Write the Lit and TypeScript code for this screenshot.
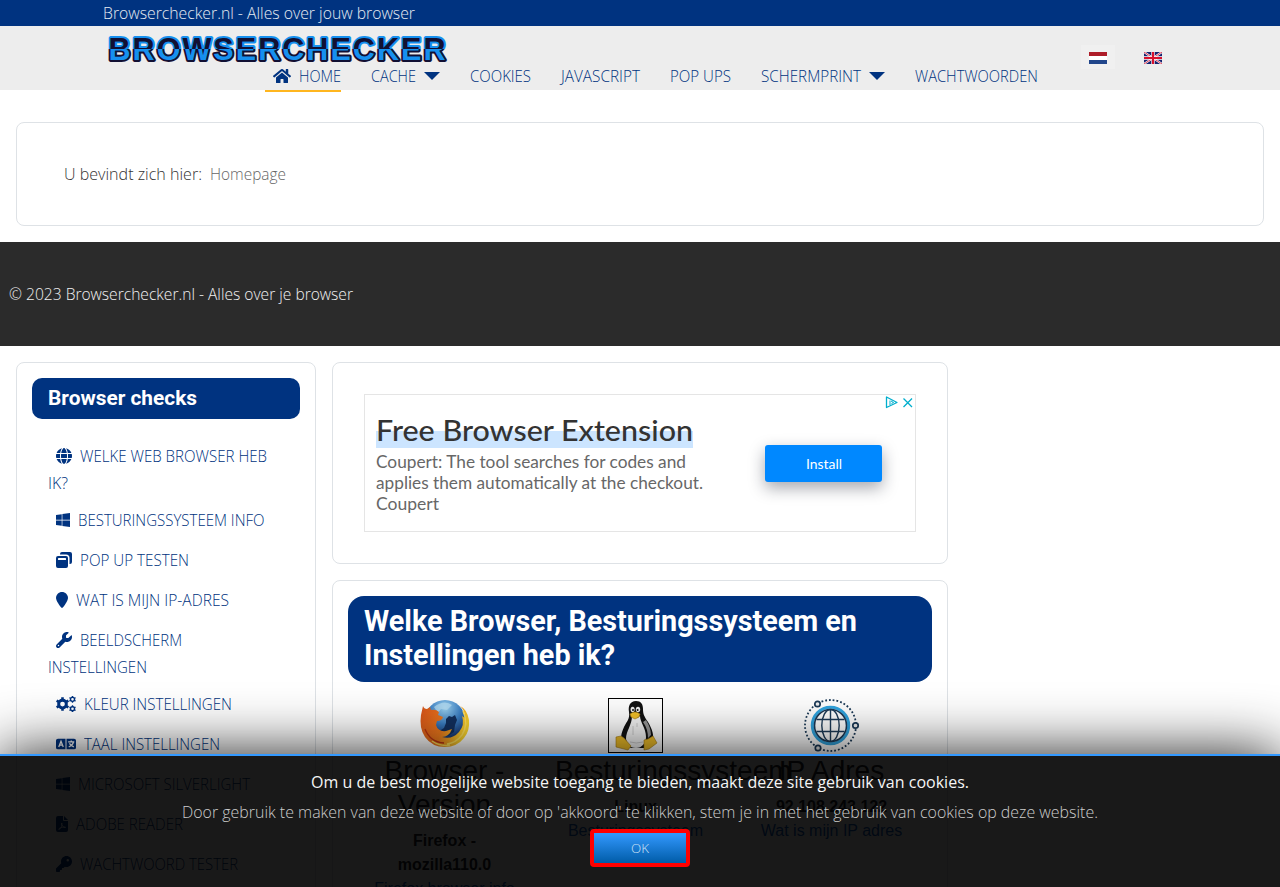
import { LitElement, html, css, svg } from "lit";
import { customElement, property, query } from "lit/decorators.js";

/* Text run stretched horizontally to a given width. */
@customElement("fit-text")
class FitText extends LitElement {
  @property({ type: Number }) w = 100;
  @property() text = "";
  @query("span") run!: HTMLSpanElement;
  static styles = css`
    :host { display: inline-block; white-space: nowrap; }
    span { display: inline-block; transform-origin: 0 50%; }
  `;
  render() { return html`<span>${this.text}</span>`; }
  updated() {
    this.run.style.transform = "none";
    const natural = this.run.getBoundingClientRect().width || this.w;
    this.style.width = this.w + "px";
    this.run.style.transform = `scaleX(${this.w / natural})`;
  }
}

const fit = (text: string, w: number) => html`<fit-text .text=${text} .w=${w}></fit-text>`;

const gear = (cx: number, cy: number, r: number, teeth: number, hole: number) => {
  let d = "";
  for (let i = 0; i < teeth; i++) {
    const a = (i / teeth) * Math.PI * 2 + Math.PI / 2;
    const s = Math.PI / teeth;
    [[-0.95, 0.76], [-0.45, 0.78], [-0.36, 1], [0.36, 1], [0.45, 0.78], [0.95, 0.76]].forEach(([k, m]) => {
      d += `${d ? "L" : "M"}${(cx + Math.cos(a + k * s) * r * m).toFixed(1)} ${(cy + Math.sin(a + k * s) * r * m).toFixed(1)}`;
    });
  }
  return `${d}ZM${cx - hole} ${cy}a${hole} ${hole} 0 1 0 ${hole * 2} 0a${hole} ${hole} 0 1 0 ${-hole * 2} 0Z`;
};

const p = (d: string) => svg`<path fill-rule="evenodd" d=${d}/>`;
const WINDOWS = "M0 93.7l183.6-25.3v177.4H0V93.7zm0 324.6l183.6 25.3V268.4H0v149.9zm203.8 28L448 480V268.4H203.8v177.9zm0-380.6v180.1H448V32L203.8 65.7z";
const icons: Record<string, [number, unknown]> = {
  home: [576, p("M280.37 148.26L96 300.11V464a16 16 0 0 0 16 16l112.06-.29a16 16 0 0 0 15.92-16V368a16 16 0 0 1 16-16h64a16 16 0 0 1 16 16v95.64a16 16 0 0 0 16 16.05L464 480a16 16 0 0 0 16-16V300L295.67 148.26a12.19 12.19 0 0 0-15.3 0zM571.6 251.47L488 182.56V44.05a12 12 0 0 0-12-12h-56a12 12 0 0 0-12 12v72.61L318.47 43a48 48 0 0 0-61 0L4.34 251.47a12 12 0 0 0-1.6 16.9l25.5 31A12 12 0 0 0 45.15 301l235.22-193.74a12.19 12.19 0 0 1 15.3 0L530.9 301a12 12 0 0 0 16.9-1.6l25.5-31a12 12 0 0 0-1.7-16.93z")],
  globe: [512, p("M352 256c0 22.2-1.2 43.6-3.3 64H163.3c-2.2-20.4-3.3-41.8-3.3-64s1.2-43.6 3.3-64H348.7c2.2 20.4 3.3 41.8 3.3 64zm28.8-64H503.9c5.3 20.5 8.1 41.9 8.1 64s-2.8 43.5-8.1 64H380.8c2.1-20.6 3.2-42 3.2-64s-1.1-43.4-3.2-64zm112.6-32H376.7c-10-63.9-29.8-117.4-55.3-151.6c78.3 20.7 142 77.5 171.9 151.6zm-149.1 0H167.7c6.1-36.4 15.5-68.6 27-94.7c10.5-23.6 22.2-40.7 33.5-51.5C239.4 3.2 248.7 0 256 0s16.6 3.2 27.8 13.8c11.3 10.8 23 27.9 33.5 51.5c11.6 26 20.9 58.2 27 94.7zm-209 0H18.6C48.6 85.9 112.2 29.1 190.6 8.4C165.1 42.6 145.3 96.1 135.3 160zM8.1 192H131.2c-2.1 20.6-3.2 42-3.2 64s1.1 43.4 3.2 64H8.1C2.8 299.5 0 278.1 0 256s2.8-43.5 8.1-64zM194.7 446.6c-11.6-26-20.9-58.2-27-94.6H344.3c-6.1 36.4-15.5 68.6-27 94.6c-10.5 23.6-22.2 40.7-33.5 51.5C272.6 508.8 263.3 512 256 512s-16.6-3.2-27.8-13.8c-11.3-10.8-23-27.9-33.5-51.5zM135.3 352c10 63.9 29.8 117.4 55.3 151.6C112.2 482.9 48.6 426.1 18.6 352H135.3zm358.1 0c-30 74.1-93.6 130.9-171.9 151.6c25.5-34.2 45.2-87.7 55.3-151.6H493.4z")],
  windows: [448, p(WINDOWS)],
  popup: [512, p("M192 0H448Q512 0 512 64V320Q512 384 448 384H432V192Q432 80 320 80H128V64Q128 0 192 0ZM64 128H320Q384 128 384 192V448Q384 512 320 512H64Q0 512 0 448V192Q0 128 64 128ZM84 192Q64 192 64 212V236Q64 256 84 256H300Q320 256 320 236V212Q320 192 300 192Z")],
  pin: [384, p("M384 192c0 87.4-117 243-168.3 307.2c-12.3 15.3-35.1 15.3-47.4 0C117 435 0 279.4 0 192C0 86 86 0 192 0S384 86 384 192z")],
  wrench: [512, p("M352 320c88.4 0 160-71.6 160-160c0-15.3-2.2-30.1-6.2-44.2c-3.1-10.8-16.4-13.2-24.3-5.3l-76.8 76.8c-3 3-7.1 4.7-11.3 4.7H336c-8.8 0-16-7.2-16-16V118.6c0-4.2 1.7-8.3 4.7-11.3l76.8-76.8c7.9-7.9 5.4-21.2-5.3-24.3C382.1 2.2 367.3 0 352 0C263.6 0 192 71.6 192 160c0 19.1 3.4 37.5 9.5 54.5L19.9 396.1C7.2 408.8 0 426.1 0 444.1C0 481.6 30.4 512 67.9 512c18 0 35.3-7.2 48-19.9L297.5 310.5c17 6.2 35.4 9.5 54.5 9.5zM80 408a24 24 0 1 1 0 48 24 24 0 1 1 0-48z")],
  gears: [640, p(gear(208, 256, 222, 6, 76) + gear(528, 106, 114, 6, 42) + gear(528, 408, 114, 6, 42))],
  language: [640, svg`<path fill-rule="evenodd" d="M64 88H576Q640 88 640 140V372Q640 424 576 424H64Q0 424 0 372V140Q0 88 64 88ZM304 88V424H336V88Z"/><path fill="none" stroke="#fff" stroke-width="42" d="M88 350L160 166L232 350M112 292H208M390 190H586M488 140V190M556 196Q536 300 408 348M430 236Q476 316 572 348"/>`],
  pdf: [384, svg`<path fill-rule="evenodd" d="M64 0H224V128Q224 160 256 160H384V448Q384 512 320 512H64Q0 512 0 448V64Q0 0 64 0ZM256 0L384 128H256Z"/><path fill="none" stroke="#fff" stroke-width="26" d="M184 222C216 316 140 424 88 430C66 404 180 348 300 354C330 384 222 380 176 270Z"/>`],
  key: [512, p("M336 352c97.2 0 176-78.8 176-176S433.2 0 336 0S160 78.8 160 176c0 18.7 2.9 36.8 8.3 53.7L7 391c-4.5 4.5-7 10.6-7 17v80c0 13.3 10.7 24 24 24h80c13.3 0 24-10.7 24-24V448h40c13.3 0 24-10.7 24-24V384h40c6.4 0 12.5-2.5 17-7l33.3-33.3c16.9 5.4 35 8.3 53.7 8.3zM376 96a40 40 0 1 1 0 80 40 40 0 1 1 0-80z")],
};

const icon = (name: string) => {
  const [w, body] = icons[name];
  return html`<svg class="icon" viewBox="0 0 ${w} 512" width=${w / 32} height="16">${body}</svg>`;
};

type Item = { icon: string; text: string; w: number; rest?: string; restW?: number };
const menu: Item[] = [
  { icon: "globe", text: "WELKE WEB BROWSER HEB", w: 187, rest: "IK?", restW: 20 },
  { icon: "windows", text: "BESTURINGSSYSTEEM INFO", w: 186.5 },
  { icon: "popup", text: "POP UP TESTEN", w: 109 },
  { icon: "pin", text: "WAT IS MIJN IP-ADRES", w: 153 },
  { icon: "wrench", text: "BEELDSCHERM", w: 102, rest: "INSTELLINGEN", restW: 99 },
  { icon: "gears", text: "KLEUR INSTELLINGEN", w: 148 },
  { icon: "language", text: "TAAL INSTELLINGEN", w: 136 },
  { icon: "windows", text: "MICROSOFT SILVERLIGHT", w: 172 },
  { icon: "pdf", text: "ADOBE READER", w: 107 },
  { icon: "key", text: "WACHTWOORD TESTER", w: 158 },
];

const caret = html`<svg class="caret" width="16" height="8" viewBox="0 0 16 8"><path d="M0 0H16L8 8Z"/></svg>`;

@customElement("app-root")
class AppRoot extends LitElement {
  static styles = css`
    :host { display: block; height: 887px; overflow: hidden; position: relative; background: #fff; color: #333;
      font: 300 15.5px/27px "Open Sans", "Noto Sans", sans-serif; }
    * { box-sizing: border-box; }
    svg { display: block; flex: none; }
    .top { height: 26px; background: #003380; color: #e6ebf2; padding-left: 103px; line-height: 26px; }
    header { height: 64px; background: #ededed; display: flex; color: #003380; }
    .brand { width: 1081px; flex: none; }
    .logo { margin: 7px 0 0 105px; }
    .logo text { font: bold 30.5px "Liberation Sans", Arial, sans-serif; }
    nav { display: flex; gap: 30px; margin-left: 265px; height: 29px; margin-top: -5px; }
    nav .item { display: flex; gap: 8px; align-items: center; height: 29px; flex: none; }
    nav .active { padding-left: 8px; border-bottom: 2px solid #ffb61f; height: 30px; padding-top: 1px; }
    .icon, .caret { fill: currentColor; }
    .icon, .caret { margin-top: -2px; }
    .flags { display: flex; margin-top: 19px; gap: 29px; height: 24px; }
    .flag { padding: 7px 8px 0; }
    .flag.on { background: #f0f0f0; }
    .flag + .flag { padding-left: 0; }
    .card { border: 1px solid #dee2e6; border-radius: 8px; background: #fff; }
    .crumbs { margin: 32px 16px 16px; height: 104px; padding: 38px 47px; display: flex; gap: 8px; }
    .here { color: #666; }
    footer { height: 104px; background: #2b2b2b; color: #f2f2f2; padding: 39px 9px; }
    .cols { display: flex; gap: 16px; padding: 16px; }
    aside { width: 300px; height: 640px; padding: 15px; flex: none; color: #003380; }
    h3 { margin: 0 0 24px; height: 41px; background: #003380; border-radius: 10px; color: #fff; padding: 0 16px; font: 700 20px/40px Roboto, sans-serif; }
    .entry { height: 40px; padding-left: 16px; }
    .entry.two { height: 64px; }
    .line { display: flex; align-items: center; gap: 8px; padding-left: 8px; height: 27px; }
    .second { height: 27px; }
    main { width: 616px; flex: none; display: flex; flex-direction: column; gap: 16px; }
    .adcard { height: 202px; padding: 31px; }
    .ad { height: 138px; border: 1px solid #e5e5e5; display: flex; position: relative; padding: 17px 0 0 11px; font-family: Lato, sans-serif; font-weight: 400; }
    .copy { width: 389px; color: #676767; font-size: 17px; line-height: 21px; }
    .copy div { height: 21px; }
    .copy .headline { font-size: 29.5px; line-height: 36px; height: 39px; color: #333; font-weight: 500; }
    .hl { display: inline-block; height: 36px; background: linear-gradient(#fff0 19px, #cce5ff 19px); }
    .install { margin-top: 33px; width: 117px; height: 37px; border-radius: 3px; background: #0088ff; color: #fff; font-size: 14px; line-height: 38px; text-align: center; box-shadow: 0 6px 16px rgba(20, 25, 45, .38); }
    .choices { position: absolute; right: 1px; top: 0; }
    .content { height: 420px; padding: 15px; }
    h2 { margin: 0 0 16px; height: 86px; border-radius: 16px; background: #003380; color: #fff; padding: 8px 16px; font: 700 28.8px/34px Roboto, sans-serif; }
    h2 div { height: 34px; }
    .checks { display: flex; padding-left: 16px; font: 400 16px/24px "Liberation Sans", Arial, sans-serif; color: #212529; text-align: center; }
    .check { width: 161px; flex: none; margin-right: 30px; }
    .check.mid { margin-right: 35px; }
    .check > svg { margin: 0 auto; }
    .check h4 { margin: 1px 0 7px; font: 400 28px/34px "Liberation Sans", Arial, sans-serif; white-space: nowrap; text-align: left; }
    .check h4.c { text-align: center; }
    .check a { color: #0d5bc0; }
    b { display: block; }
    .cookie { position: absolute; left: 0; right: 0; bottom: 0; height: 133px; border-top: 2px solid #3399ff; background: rgba(0, 0, 0, .9); background-clip: padding-box; box-shadow: 0 0 60px rgba(0, 0, 0, .9); display: flex; flex-direction: column; align-items: center; padding-top: 13px; color: #ccc; }
    .cookie .lead { color: #f5f5f5; font-weight: 400; height: 30px; }
    .cookie .more { height: 30px; }
    .ok { width: 100px; height: 38px; border: 4px solid #f00; border-radius: 4px; background: linear-gradient(#3399ff, #005ca8); color: #cfe2f5; text-align: center; font-size: 13.5px; line-height: 31px; }
  `;

  logo() {
    return html`<svg class="logo" width="346" height="34" viewBox="0 0 346 34">
      <defs>
        <linearGradient id="f" gradientUnits="userSpaceOnUse" x1="0" y1="0" x2="0" y2="34"><stop offset=".48" stop-color="#111033"/><stop offset=".48" stop-color="#1690ef"/></linearGradient>
        <linearGradient id="s" gradientUnits="userSpaceOnUse" x1="0" y1="0" x2="0" y2="34"><stop offset=".48" stop-color="#1690ef"/><stop offset=".48" stop-color="#111033"/></linearGradient>
      </defs>
      <text x="3.500" y="26.500" textLength="337" lengthAdjust="spacing" fill="url(#f)" stroke="url(#s)" stroke-width="3.800" stroke-linejoin="round" paint-order="stroke">BROWSERCHECKER</text>
    </svg>`;
  }

  firefox() {
    return html`<svg width="55" height="55" viewBox="0 0 55 55">
      <defs>
        <radialGradient id="b" cx=".5" cy=".2" r=".8"><stop stop-color="#9dd4f3"/><stop offset=".5" stop-color="#3b7fc4"/><stop offset="1" stop-color="#122c66"/></radialGradient>
        <linearGradient id="o" x1="0" y1="0" x2="1" y2=".3"><stop stop-color="#d9541a"/><stop offset=".55" stop-color="#ee7a1c"/><stop offset="1" stop-color="#fbd52d"/></linearGradient>
      </defs>
      <circle cx="28" cy="22" r="20" fill="url(#b)"/>
      <path fill="#12305f" d="M29 21l3-3 3 1 3-2 2 5-2 5-1 7-6 4-3-3-7-1 6-4 2-5z"/>
      <path fill="#b9e0f5" opacity=".7" d="M17 9q10-8 18-2l-5 5-6-1-3 4z"/>
      <path fill="url(#o)" d="M6 8q1 3 4 3l3-2 1 3q5-1 8 2l-1 3 5 2q-1 4-6 4l-1 4q2 7 10 6l6-2q-3 8-10 8 10 3 17-5 6-7 3-16l3 2q0-8-5-12 7 3 9 14 1 11-5 18-7 9-19 9-13 0-20-10-6-9-4-22z"/>
      <path fill="none" stroke="#ffe15c" stroke-width="1.400" d="M46 13q6 13-1 24-6 8-15 9M15 43q9 6 18 4"/>
      <path fill="none" stroke="#b83312" stroke-width="1.300" d="M8 31q5 13 19 14"/>
    </svg>`;
  }

  tux() {
    return html`<svg width="55" height="55" viewBox="0 0 55 55">
      <rect x=".5" y=".5" width="54" height="54" fill="#fff" stroke="#000"/>
      <path fill="#111" d="M28 3c-6 0-8 5-7 11 1 7-2 9-5 15-3 7-4 11-1 16l8 5h13l8-6c3-6 0-13-4-20-4-6-5-8-5-13 0-5-2-8-7-8z"/>
      <path fill="#f5f5f5" d="M24 18q4 4 8 0c0 6 6 12 6 21 0 6-4 11-10 11-7 0-9-5-10-9 0-8 6-14 6-23z"/>
      <path fill="none" stroke="#ccc" d="M25 28v9M29 25v4M22 44q6 2 13 0"/>
      <path fill="#999" d="M38 22q5 8 5 15l-3 3q0-9-5-16z"/>
      <ellipse cx="24.600" cy="11.500" rx="2" ry="2.800" fill="#eee"/><ellipse cx="30" cy="11.500" rx="2.200" ry="2.800" fill="#eee"/>
      <circle cx="25" cy="12" r="1" fill="#111"/><circle cx="29.600" cy="12" r="1" fill="#111"/>
      <path fill="#f2c029" stroke="#a47a12" stroke-width=".6" d="M22 16q5-4 10 0l-1 3-4 2-4-2zM8 39l5-1 3 2 7 8-3 4-12-3v-5zM36 42l4-1 5-3 4 7-8 6-5 1z"/>
    </svg>`;
  }

  ip() {
    return html`<svg width="55" height="55" viewBox="0 0 55 55" fill="none" stroke="#1c3a57">
      <circle cx="26.500" cy="27.500" r="25.500" stroke-width="1.800" stroke-dasharray="1.800 2"/>
      <circle cx="26.500" cy="27.500" r="18.200" stroke="#30a4df" stroke-width="3"/>
      <circle cx="26.500" cy="27.500" r="16" stroke-width="1.600"/>
      <ellipse cx="26.500" cy="27.500" rx="8.700" ry="16" stroke-width="1.400"/>
      <path stroke-width="1.400" d="M26.500 11.500v32M12.500 21.500h28M12.500 33.500h28"/>
      <g stroke-width="1.700" fill="#eee"><circle cx="13.500" cy="6" r="2.700"/><circle cx="51.500" cy="27.500" r="2.700"/><circle cx="14" cy="50" r="2.700"/></g>
    </svg>`;
  }

  render() {
    return html`
      <div class="top">${fit("Browserchecker.nl - Alles over jouw browser", 312)}</div>
      <header>
        <div class="brand">
          ${this.logo()}
          <nav>
            <div class="item active">${icon("home")}${fit("HOME", 42)}</div>
            <div class="item">${fit("CACHE", 45)}${caret}</div>
            <div class="item">${fit("COOKIES", 61)}</div>
            <div class="item">${fit("JAVASCRIPT", 79)}</div>
            <div class="item">${fit("POP UPS", 61)}</div>
            <div class="item">${fit("SCHERMPRINT", 100)}${caret}</div>
            <div class="item">${fit("WACHTWOORDEN", 123)}</div>
          </nav>
        </div>
        <div class="flags">
          <div class="flag on"><svg width="18" height="12"><rect width="18" height="12" fill="#fff"/><rect width="18" height="4" fill="#ae1c28"/><rect y="8" width="18" height="4" fill="#21468b"/></svg></div>
          <div class="flag"><svg width="18" height="12" viewBox="0 0 18 12"><rect width="18" height="12" fill="#14226f"/><path stroke="#fff" stroke-width="2" d="M0 0L18 12M18 0L0 12"/><path stroke="#d8203c" stroke-width=".9" d="M0 0L18 12M18 0L0 12"/><path stroke="#fff" stroke-width="3.400" d="M9 0V12M0 6H18"/><path stroke="#d8102c" stroke-width="2.200" d="M9 0V12M0 6H18"/></svg></div>
        </div>
      </header>
      <div class="card crumbs">${fit("U bevindt zich hier:", 138)}<span class="here">${fit("Homepage", 76)}</span></div>
      <footer>${fit("© 2023 Browserchecker.nl - Alles over je browser", 344)}</footer>
      <div class="cols">
        <aside class="card">
          <h3>${fit("Browser checks", 149)}</h3>
          ${menu.map((m) => html`<div class="entry ${m.rest ? "two" : ""}">
            <div class="line">${icon(m.icon)}${fit(m.text, m.w)}</div>
            ${m.rest ? html`<div class="second">${fit(m.rest, m.restW!)}</div>` : ""}
          </div>`)}
        </aside>
        <main>
          <div class="card adcard">
            <div class="ad">
              <div class="copy">
                <div class="headline"><span class="hl">${fit("Free Browser Extension", 317)}</span></div>
                <div>${fit("Coupert: The tool searches for codes and", 310)}</div>
                <div>${fit("applies them automatically at the checkout.", 327)}</div>
                <div>${fit("Coupert", 63)}</div>
              </div>
              <div class="install">${fit("Install", 36)}</div>
              <svg class="choices" width="29" height="14" viewBox="0 0 29 14" fill="none" stroke="#00aecd" stroke-width="1.300"><path stroke-linejoin="round" d="M1.500 2V12.500L12 7.500Z"/><path stroke-width="1" d="M5 5.500V10M6 6L8.500 7.500L6.500 8.500"/><path d="M18.500 3.500L27 12M27 3.500L18.500 12"/></svg>
            </div>
          </div>
          <div class="card content">
            <h2><div>${fit("Welke Browser, Besturingssysteem en", 493)}</div><div>${fit("Instellingen heb ik?", 251)}</div></h2>
            <div class="checks">
              <div class="check">${this.firefox()}<h4 class="c">Browser -<br />Version</h4><b>Firefox -</b><b>mozilla110.0</b><a>Firefox browser info</a></div>
              <div class="check mid">${this.tux()}<h4>Besturingssysteem</h4><b>Linux</b><a>Besturingssysteem</a></div>
              <div class="check">${this.ip()}<h4 class="c">IP Adres</h4><b>92.108.243.122</b><a>Wat is mijn IP adres</a></div>
            </div>
          </div>
        </main>
      </div>
      <div class="cookie">
        <div class="lead">${fit("Om u de best mogelijke website toegang te bieden, maakt deze site gebruik van cookies.", 658)}</div>
        <div class="more">${fit("Door gebruik te maken van deze website of door op 'akkoord' te klikken, stem je in met het gebruik van cookies op deze website.", 916)}</div>
        <div class="ok">${fit("OK", 18)}</div>
      </div>`;
  }
}
